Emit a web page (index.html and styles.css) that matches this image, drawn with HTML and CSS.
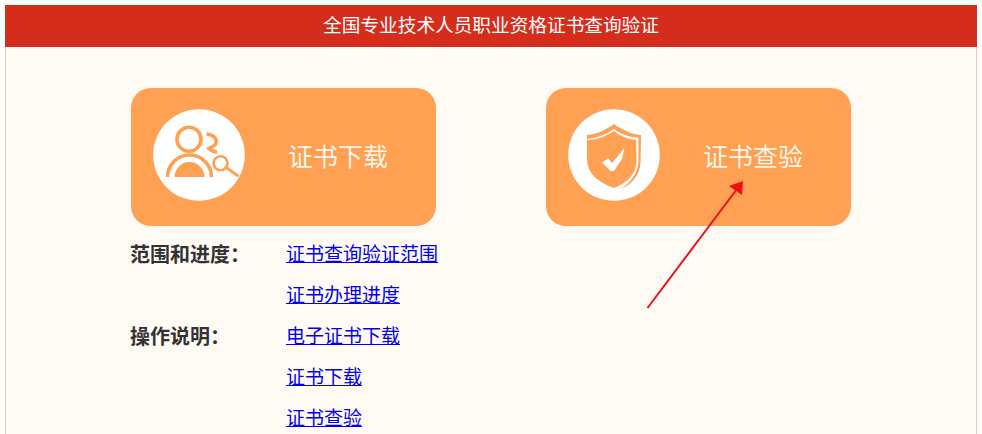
FILE: index.html
```html
<!DOCTYPE html>
<html lang="zh-CN">
<head>
<meta charset="utf-8">
<title>全国专业技术人员职业资格证书查询验证</title>
<link rel="stylesheet" href="styles.css">
</head>
<body>
<div class="page">
  <header class="banner">全国专业技术人员职业资格证书查询验证</header>
  <main class="content">
    <div class="cards">
      <a class="card">
        <svg class="card-icon" viewBox="0 0 92 92" aria-hidden="true">
          <circle cx="46" cy="46" r="45.8" fill="#fff"/>
          <g fill="none" stroke="#ffa052" stroke-width="3.6">
            <circle cx="36" cy="30.3" r="12"/>
            <path d="M14.5 68 A22 22 0 0 1 58.5 68"/>
            <path d="M53.5 25 C61 25.5 65 31 62.5 35 C61 37.5 58 38.5 56 39.5 C58 41.5 61 43 64 43"/>
          </g>
          <path d="M21.5 68 A15 15 0 0 1 51.5 68 Z" fill="#ffa052"/>
          <g fill="none" stroke="#ffa052" stroke-width="2.6">
            <circle cx="67.5" cy="54.3" r="7"/>
            <path d="M73 58.5 L84.5 66.5" stroke-linecap="round" stroke-width="3"/>
          </g>
        </svg>
        <span class="card-title">证书下载</span>
      </a>
      <a class="card">
        <svg class="card-icon" viewBox="0 0 92 92" aria-hidden="true">
          <circle cx="46" cy="46" r="45.8" fill="#fff"/>
          <path d="M19 26 C29 25 38 21 46 15 C54 21 63 25 73 26 L72.5 54 C72 66 64 75 52 81 C62 74 70 65 70.5 52 L70.5 28.5 C61 28 52 25 46 20 C39 25 29 29 19 30 Z" fill="#ffa052"/>
          <path d="M19 31 C29 31 39 27 46 22 C52 27 59 30 68 31 L68.5 52 C68 66 58 74 46 79 C32 74 19.5 66 19 50 Z" fill="#ffa052"/>
          <path d="M34 53.5 L40 49.5 L44 54 L56.5 39 L54 50 L46 62 L42.5 62 Z" fill="#fff"/>
        </svg>
        <span class="card-title">证书查验</span>
      </a>
    </div>
    <svg class="arrow" viewBox="0 0 110 140" aria-hidden="true">
      <path d="M2.5 133 L92 14" fill="none" stroke="#e8141a" stroke-width="2"/>
      <path d="M98 6 L84 11 L97 20 Z" fill="#f20d14"/>
    </svg>
    <dl class="guide">
      <dt class="guide-label">范围和进度：</dt>
      <dd class="guide-links">
        <a class="guide-link" href="#">证书查询验证范围</a>
        <a class="guide-link" href="#">证书办理进度</a>
      </dd>
      <dt class="guide-label">操作说明：</dt>
      <dd class="guide-links">
        <a class="guide-link" href="#">电子证书下载</a>
        <a class="guide-link" href="#">证书下载</a>
        <a class="guide-link" href="#">证书查验</a>
      </dd>
    </dl>
  </main>
</div>
</body>
</html>
```
FILE: styles.css
```css
html, body {
  height: 100%;
  overflow: hidden;
}
body {
  margin: 0;
  padding: 5px 5px 0;
  box-sizing: border-box;
  background: #fff;
  font-family: "Liberation Serif", "Noto Sans CJK SC", serif;
}
.page {
  min-height: 470px;
  background: #fffaf4;
  border: 1px solid #f0c8b8;
  border-top: 0;
  box-sizing: border-box;
  margin: 0;
}
.banner {
  height: 42px;
  margin: 0 -1px;
  background: #d52d1c;
  color: #fff;
  font-size: 18.67px;
  line-height: 42px;
  text-align: center;
}
.content {
  position: relative;
  padding: 41px 125px 0;
}
.cards {
  display: flex;
  gap: 110px;
}
.card {
  flex: 0 0 305px;
  height: 138px;
  box-sizing: border-box;
  display: flex;
  align-items: center;
  padding: 0 0 5px 22px;
  background: #ffa052;
  border-radius: 20px;
}
.card-icon {
  width: 92px;
  height: 92px;
  flex: none;
}
.card-title {
  margin: 1px 0 0 43px;
  color: #fff6ec;
  font-family: "Noto Sans CJK SC", sans-serif;
  font-size: 25px;
  font-weight: 400;
}
.arrow {
  position: absolute;
  left: 639px;
  top: 128px;
  width: 110px;
  height: 140px;
}
.guide {
  display: grid;
  grid-template-columns: 155px 1fr;
  margin: 8px 0 0;
  font-size: 19px;
}
.guide-label {
  height: 41px;
  line-height: 39px;
  margin-left: -1px;
  font-family: "Noto Sans CJK SC", sans-serif;
  font-weight: 700;
  font-size: 20px;
  color: #333;
}
.guide-links {
  margin: 0;
  display: flex;
  flex-direction: column;
}
.guide-link {
  height: 41px;
  line-height: 41px;
  color: #0000ee;
  text-decoration: underline;
  align-self: flex-start;
}
```
